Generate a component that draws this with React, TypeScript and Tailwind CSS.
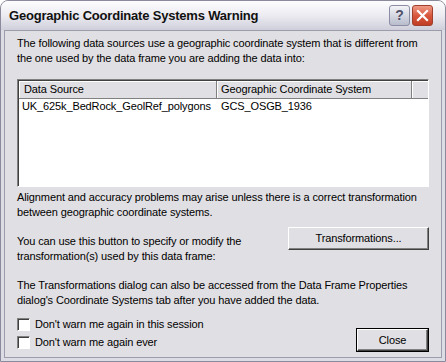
import * as React from "react";

const font = { fontFamily: '"Liberation Sans", Arial, sans-serif' };

function Checkbox({ label }: { label: string }) {
  return (
    <label className="flex items-center gap-[5px] h-[18px]">
      <span className="w-[13px] h-[13px] bg-white border border-t-[#808080] border-l-[#808080] border-b-[#ffffff] border-r-[#ffffff] shadow-[inset_1px_1px_0_#404040]" />
      <span>{label}</span>
    </label>
  );
}

function Button({ children, def, className }: { children: React.ReactNode; def?: boolean; className?: string }) {
  return (
    <div className={`${def ? "border border-black" : ""} ${className ?? ""}`}>
      <div className="h-full flex items-center justify-center bg-[#e0dfe3] border border-t-white border-l-white border-b-[#404040] border-r-[#404040] shadow-[inset_-1px_-1px_0_#808080]">
        {children}
      </div>
    </div>
  );
}

export default function App() {
  return (
    <div className="w-[446px] h-[362px] bg-white" style={font}>
      <div className="w-[446px] h-[362px] flex flex-col rounded-t-[8px] border border-[#8a8a9c] bg-[#dcdce4] overflow-hidden">
        {/* title bar */}
        <div className="h-[29px] flex items-center pl-[8px] pr-[12px] bg-gradient-to-b from-[#fdfdfe] via-[#ecebf1] to-[#cfcfdb]">
          <span className="text-[13px] font-bold text-[#111] tracking-[-0.2px]">Geographic Coordinate Systems Warning</span>
          <div className="ml-auto flex gap-[2px]">
            <div className="w-[21px] h-[21px] rounded-[3px] border border-[#8c8ca4] bg-gradient-to-b from-[#f4f4f8] to-[#b8bccc] flex items-center justify-center text-[14px] font-bold text-[#505068]">
              ?
            </div>
            <div className="w-[21px] h-[21px] rounded-[3px] border border-[#a0402c] bg-gradient-to-b from-[#ee9a86] via-[#d8583e] to-[#c03c24] flex items-center justify-center">
              <svg width="13" height="13" viewBox="0 0 13 13">
                <path d="M2 2 L11 11 M11 2 L2 11" stroke="white" strokeWidth="2.2" strokeLinecap="square" />
              </svg>
            </div>
          </div>
        </div>
        {/* body */}
        <div className="flex-1 mx-[3px] mb-[3px] border border-[#9c9cac] bg-[#e0dfe3] px-[12px] pt-[5px] text-[11px] leading-[15px] tracking-[-0.12px] text-black">
          <p>
            The following data sources use a geographic coordinate system that is different from
            <br />
            the one used by the data frame you are adding the data into:
          </p>
          <div className="mt-[13px] h-[108px] bg-white border border-t-[#808080] border-l-[#808080] border-b-white border-r-white shadow-[inset_1px_1px_0_#404040]">
            <div className="flex h-[18px] ml-[1px] mt-[1px]">
              <div className="w-[198px] pl-[5px] flex items-center bg-[#e0dfe3] border-r border-b border-r-[#808080] border-b-[#808080] shadow-[inset_1px_1px_0_white]">
                Data Source
              </div>
              <div className="w-[195px] pl-[4px] flex items-center bg-[#e0dfe3] border-r border-b border-r-[#808080] border-b-[#808080] shadow-[inset_1px_1px_0_white]">
                Geographic Coordinate System
              </div>
              <div className="flex-1 bg-[#e0dfe3] border-b border-b-[#808080] shadow-[inset_1px_1px_0_white]" />
            </div>
            <div className="flex h-[15px] items-center">
              <div className="w-[199px] pl-[4px]">UK_625k_BedRock_GeolRef_polygons</div>
              <div className="pl-[4px]">GCS_OSGB_1936</div>
            </div>
          </div>
          <p className="mt-[3px]">
            Alignment and accuracy problems may arise unless there is a correct transformation
            <br />
            between geographic coordinate systems.
          </p>
          <div className="mt-[14px] flex items-start">
            <p>
              You can use this button to specify or modify the
              <br />
              transformation(s) used by this data frame:
            </p>
            <Button className="ml-auto mt-[-7px] w-[141px] h-[23px]">Transformations...</Button>
          </div>
          <p className="mt-[14px]">
            The Transformations dialog can also be accessed from the Data Frame Properties
            <br />
            dialog's Coordinate Systems tab after you have added the data.
          </p>
          <div className="mt-[7px] flex items-end">
            <div className="flex flex-col">
              <Checkbox label="Don't warn me again in this session" />
              <Checkbox label="Don't warn me again ever" />
            </div>
            <Button def className="ml-auto mb-[-1px] w-[73px] h-[24px]">Close</Button>
          </div>
        </div>
      </div>
    </div>
  );
}
